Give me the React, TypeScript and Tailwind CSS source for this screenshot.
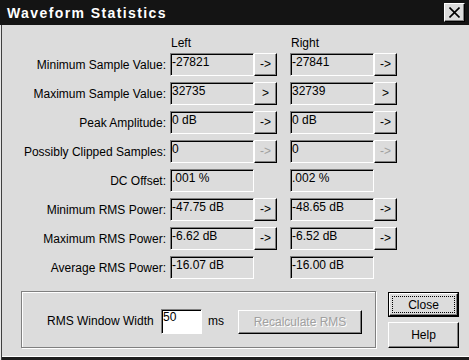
import React from "react";

const raised =
  "border border-t-white border-l-white border-r-black border-b-black shadow-[inset_-1px_-1px_0_#808080]";
const sunken =
  "border border-t-[#808080] border-l-[#808080] border-r-white border-b-white shadow-[inset_1px_1px_0_#000]";

type Btn = "on" | "off" | null;
type Row = [string, string, Btn, string];

const rows: Row[] = [
  ["Minimum Sample Value:", "-27821", "on", "-27841"],
  ["Maximum Sample Value:", "32735", "on", "32739"],
  ["Peak Amplitude:", "0 dB", "on", "0 dB"],
  ["Possibly Clipped Samples:", "0", "off", "0"],
  ["DC Offset:", ".001 %", null, ".002 %"],
  ["Minimum RMS Power:", "-47.75 dB", "on", "-48.65 dB"],
  ["Maximum RMS Power:", "-6.62 dB", "on", "-6.52 dB"],
  ["Average RMS Power:", "-16.07 dB", null, "-16.00 dB"],
];

function Field({ v }: { v: string }) {
  return (
    <div className={`w-[84px] h-[23px] ${sunken} bg-[#dcdcdc] pl-[1px] leading-[16px] whitespace-pre`}>
      {v}
    </div>
  );
}

function ArrowBtn({ state, glyph }: { state: Btn; glyph: string }) {
  if (state === null) return <div className="w-[23px] h-[23px]" />;
  return (
    <div
      className={`w-[23px] h-[23px] ${raised} bg-[#dcdcdc] flex items-center justify-center leading-none pb-[1px] ${
        state === "off" ? "text-[#a0a0a0]" : "text-black"
      }`}
    >
      {glyph}
    </div>
  );
}

export default function App() {
  return (
    <div className="w-[469px] h-[360px] bg-[#dcdcdc] flex flex-col font-['Liberation_Sans',Arial,sans-serif] text-[12px] text-black shadow-[inset_1px_0_0_#e8e8e8,inset_2px_0_0_#404040,inset_0_-3px_0_#1e1e1e,inset_0_-4px_0_#ffffff] overflow-hidden">
      {/* Title bar */}
      <div className="h-[25px] bg-[#141414] flex items-center justify-between pl-[7px] pr-[4px] shrink-0">
        <span className="text-white font-bold text-[14px] tracking-[1.4px] leading-none">
          Waveform Statistics
        </span>
        <div className={`w-[21px] h-[19px] ${raised} bg-[#dcdcdc] flex items-center justify-center`}>
          <svg width="11" height="11" viewBox="0 0 11 11">
            <path d="M0.5 0.5 L10.5 10.5 M10.5 0.5 L0.5 10.5" stroke="#000" strokeWidth="1.6" />
          </svg>
        </div>
      </div>

      {/* Body */}
      <div className="pt-[11px] flex flex-col">
        <div className="flex h-[14px] leading-[14px] mb-[3px]">
          <div className="w-[170px]" />
          <div className="w-[107px] pl-[1px]">Left</div>
          <div className="w-[13px]" />
          <div className="w-[107px] pl-[1px]">Right</div>
        </div>

        <div className="flex flex-col gap-[6px]">
          {rows.map((r, i) => {
            const state = r[2];
            return (
              <div key={i} className="flex h-[23px]">
                <div className="w-[170px] pr-[4px] text-right leading-[25px] whitespace-nowrap">{r[0]}</div>
                <Field v={r[1]} />
                <ArrowBtn state={state} glyph={i === 1 ? ">" : "->"} />
                <div className="w-[13px]" />
                <Field v={r[3]} />
                <ArrowBtn state={state} glyph={i === 1 ? ">" : "->"} />
              </div>
            );
          })}
        </div>

        {/* Bottom area */}
        <div className="flex mt-[12px]">
          <div className="ml-[21px] w-[355px] h-[57px] border border-[#808080] shadow-[inset_1px_1px_0_#fff,1px_1px_0_#fff] flex items-start pt-[17px] pl-[25px]">
            <div className="flex items-center h-[25px]">
              <div className="w-[114px] leading-[25px] whitespace-nowrap">RMS Window Width</div>
              <div className={`w-[41px] h-[25px] ${sunken} bg-white pl-[1px] leading-[15px]`}>50</div>
              <div className="w-[36px] pl-[6px] leading-[25px]">ms</div>
              <div
                className={`w-[124px] h-[24px] ${raised} bg-[#dcdcdc] flex items-center justify-center text-[#a0a0a0] [text-shadow:1px_1px_0_#fff] leading-none`}
              >
                Recalculate RMS
              </div>
            </div>
          </div>

          <div className="ml-[12px] pt-[1px] flex flex-col gap-[5px]">
            <div className="w-[71px] h-[25px] border border-black bg-[#dcdcdc]">
              <div className={`w-full h-full ${raised} p-[2px]`}>
                <div className="w-full h-full border border-dotted border-black flex items-center justify-center leading-none">
                  Close
                </div>
              </div>
            </div>
            <div className={`w-[71px] h-[26px] ${raised} bg-[#dcdcdc] flex items-center justify-center leading-none`}>
              Help
            </div>
          </div>
        </div>
      </div>
    </div>
  );
}
